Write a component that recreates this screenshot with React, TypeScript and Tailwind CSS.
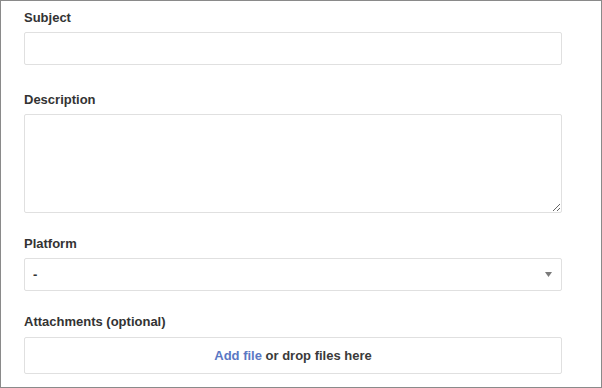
import React from "react";

const labelCls =
  "block text-[13px] font-bold leading-[18px] text-[#333333]";

export default function App() {
  return (
    <div
      className="w-[602px] h-[388px] border border-[#8a8a8a] bg-white pl-[23px] pr-[39px] pt-[8px]"
      style={{ fontFamily: '"Liberation Sans", Arial, sans-serif' }}
    >
      <div className="flex flex-col">
        <label className={labelCls}>Subject</label>
        <input
          type="text"
          className="mt-[5px] h-[33px] w-full rounded-[2px] border border-[#e0e0e0] bg-white px-2 outline-none"
        />

        <label className={`${labelCls} mt-[26px]`}>Description</label>
        <textarea className="mt-[5px] h-[99px] w-full rounded-[2px] border border-[#e0e0e0] bg-white px-2 outline-none" />

        <label className={`${labelCls} mt-[22px]`}>Platform</label>
        <div className="mt-[5px] flex h-[33px] w-full items-center justify-between rounded-[2px] border border-[#e0e0e0] bg-white pl-[8px] pr-[9px]">
          <span className="text-[13px] font-bold text-[#333333]">-</span>
          <svg width="7" height="5" viewBox="0 0 7 5">
            <path d="M0 0 L7 0 L3.5 5 Z" fill="#7a7a7a" />
          </svg>
        </div>

        <label className={`${labelCls} mt-[22px]`}>Attachments (optional)</label>
        <div className="mt-[6px] flex h-[37px] w-full items-center justify-center rounded-[2px] border border-[#e0e0e0] bg-white text-[13px] font-bold">
          <span className="text-[#5a78c4]">Add file</span>
          <span className="text-[#3a3a3a]">&nbsp;or drop files here</span>
        </div>
      </div>
    </div>
  );
}
